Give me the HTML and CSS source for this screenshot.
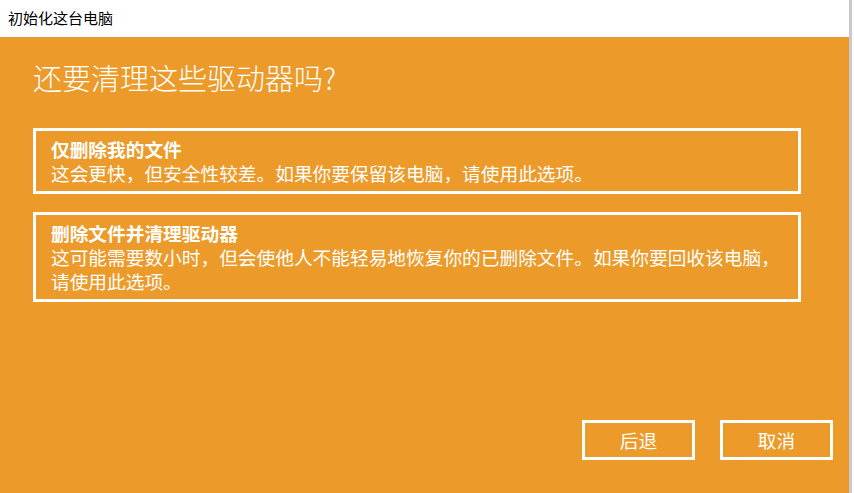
FILE: index.html
```html
<!DOCTYPE html>
<html lang="zh-CN">
<head>
<meta charset="utf-8">
<title>初始化这台电脑</title>
<link rel="stylesheet" href="styles.css">
</head>
<body>
<div class="window">
  <div class="titlebar">初始化这台电脑</div>
  <div class="main">
    <h1 class="heading">还要清理这些驱动器吗?</h1>
    <div class="option option-first">
      <div class="opt-title">仅删除我的文件</div>
      <div class="opt-desc">这会更快，但安全性较差。如果你要保留该电脑，请使用此选项。</div>
    </div>
    <div class="option">
      <div class="opt-title">删除文件并清理驱动器</div>
      <div class="opt-desc">这可能需要数小时，但会使他人不能轻易地恢复你的已删除文件。如果你要回收该电脑，请使用此选项。</div>
    </div>
    <div class="actions">
      <button class="btn">后退</button>
      <button class="btn">取消</button>
    </div>
  </div>
</div>
</body>
</html>
```

FILE: styles.css
```css
html, body {
  margin: 0;
  padding: 0;
  background: #ffffff;
}
body {
  width: 854px;
  height: 493px;
  overflow: hidden;
  font-family: "Noto Sans CJK SC", "Microsoft YaHei", sans-serif;
}
.window {
  width: 849px;
  height: 493px;
  border-right: 3px solid #cacaca;
  display: flex;
  flex-direction: column;
}
.titlebar {
  height: 37px;
  line-height: 36px;
  padding-left: 8px;
  font-size: 15px;
  color: #000000;
  background: #ffffff;
  flex: none;
}
.main {
  flex: 1;
  background: #ec9a29;
  color: #ffffff;
  display: flex;
  flex-direction: column;
  padding: 0 16px 33px 33px;
}
.heading {
  margin: 23px 0 0 0;
  font-size: 29px;
  line-height: 35px;
  font-weight: 300;
  height: 35px;
}
.option {
  width: 768px;
  box-sizing: border-box;
  border: 3px solid #ffffff;
  padding: 6px 15px;
  font-size: 18.7px;
  line-height: 24px;
  margin-top: 18px;
}
.option-first {
  margin-top: 33px;
}
.opt-title {
  font-weight: 700;
}
.opt-desc {
  font-weight: 400;
}
.actions {
  margin-top: auto;
  display: flex;
  justify-content: flex-end;
  gap: 25px;
}
.btn {
  width: 113px;
  height: 40px;
  box-sizing: border-box;
  border: 3px solid #ffffff;
  background: transparent;
  color: #ffffff;
  font-family: "Noto Sans CJK SC", "Microsoft YaHei", sans-serif;
  font-size: 18.7px;
  padding: 0;
  line-height: 32px;
}
```
